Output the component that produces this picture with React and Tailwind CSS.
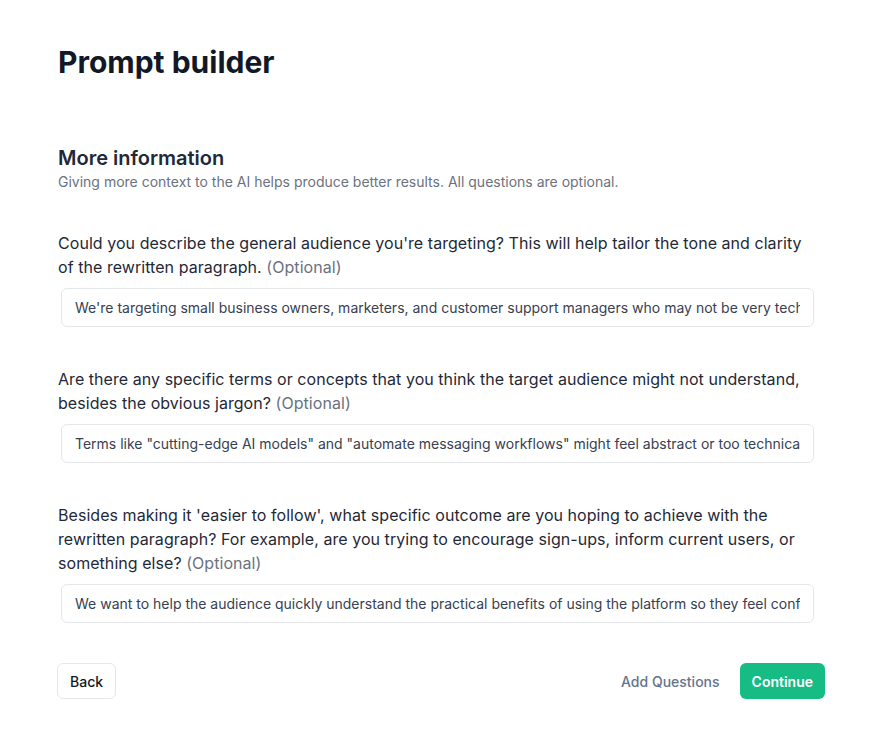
import React from 'react';

const questions = [
  {
    text: "Could you describe the general audience you're targeting? This will help tailor the tone and clarity of the rewritten paragraph.",
    answer: "We're targeting small business owners, marketers, and customer support managers who may not be very tech-savvy but want to improve how they communicate with customers.",
  },
  {
    text: 'Are there any specific terms or concepts that you think the target audience might not understand, besides the obvious jargon?',
    answer: 'Terms like "cutting-edge AI models" and "automate messaging workflows" might feel abstract or too technical for this audience.',
  },
  {
    text: "Besides making it 'easier to follow', what specific outcome are you hoping to achieve with the rewritten paragraph? For example, are you trying to encourage sign-ups, inform current users, or something else?",
    answer: 'We want to help the audience quickly understand the practical benefits of using the platform so they feel confident signing up.',
  },
];

function Question({ text, answer }) {
  return (
    <div className="flex flex-col">
      <label className="text-[16px] leading-[24px] text-[#1f2937] pr-[20px] tracking-[0.05px]">
        {text} <span className="text-[#6b7280]">(Optional)</span>
      </label>
      <input
        type="text"
        defaultValue={answer}
        className="mt-[9px] ml-[3px] w-[753px] h-[39px] px-[13px] rounded-md border border-[#e5e7eb] text-[14px] text-[#374151] outline-none bg-white"
      />
    </div>
  );
}

export default function App() {
  return (
    <div className="min-h-screen bg-white" style={{ fontFamily: 'Inter, "Noto Sans", sans-serif' }}>
      <div className="pl-[58px] pt-[44px] w-[825px]">
        <h1 className="text-[30px] leading-[36px] font-bold text-[#111827]">Prompt builder</h1>

        <div className="mt-[64px]">
          <h2 className="text-[20px] leading-[28px] font-semibold text-[#1f2937]">More information</h2>
          <p className="text-[14px] leading-[20px] text-[#6b7280]">
            Giving more context to the AI helps produce better results. All questions are optional.
          </p>
        </div>

        <div className="mt-[39px] flex flex-col gap-[40px]">
          {questions.map((q, i) => (
            <Question key={i} text={q.text} answer={q.answer} />
          ))}
        </div>

        <div className="mt-[40px] flex items-center justify-between">
          <button className="h-[36px] px-[12px] rounded-md border border-[#e5e7eb] bg-white text-[14px] font-medium text-[#111827] -ml-[1px]">
            Back
          </button>
          <div className="flex items-center gap-[20px]">
            <button className="h-[36px] px-[0px] text-[14px] font-medium text-[#64748b]">Add Questions</button>
            <button className="h-[36px] px-[12px] rounded-md bg-[#17bb84] text-[14px] font-semibold text-white">
              Continue
            </button>
          </div>
        </div>
      </div>
    </div>
  );
}
